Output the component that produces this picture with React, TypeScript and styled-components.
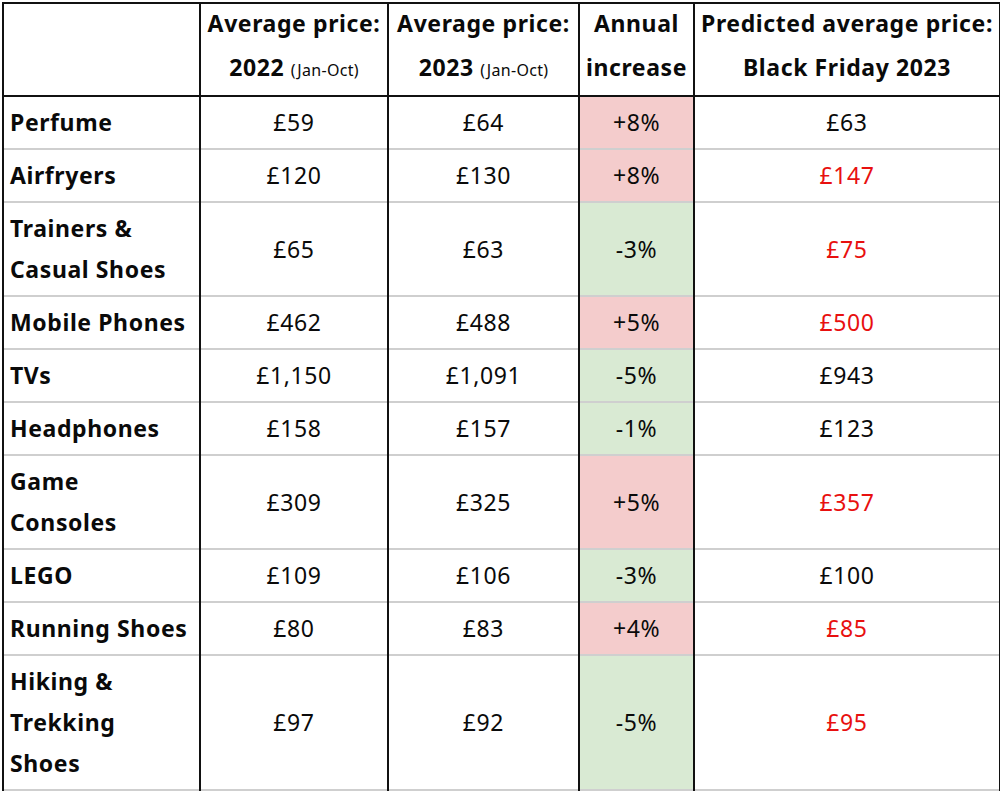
import React from "react";
import styled, { createGlobalStyle } from "styled-components";

const Global = createGlobalStyle`
  html, body { margin: 0; padding: 0; background: #fff; }
  body { font-family: "Noto Sans", "Open Sans", sans-serif; color: #0a0a0a; }
`;

const Wrap = styled.div`
  padding: 2px;
`;

const Table = styled.table`
  border-collapse: collapse;
  table-layout: fixed;
  width: 997px;
  border: 2px solid #111;
  font-size: 23px;
  letter-spacing: 0.6px;
`;

const HeadCell = styled.th`
  border: 2px solid #111;
  font-weight: 700;
  text-align: center;
  vertical-align: middle;
  padding: 0 0 3px;
  line-height: 44px;
  white-space: nowrap;
`;

const HeadText = styled.div`
  margin: -3px 0 3px;
`;

const Small = styled.span`
  font-size: 16px;
  font-weight: 400;
  line-height: 1;
  letter-spacing: 0.3px;
`;

const Row = styled.tr`
  border-bottom: 2px solid #cfcfcf;
`;

const Cell = styled.td<{ $tone?: "up" | "down"; $red?: boolean; $label?: boolean }>`
  border-left: 2px solid #111;
  border-right: 2px solid #111;
  padding: 5px 6px 5px;
  line-height: 41px;
  text-align: ${(p) => (p.$label ? "left" : "center")};
  font-weight: ${(p) => (p.$label ? 700 : 400)};
  color: ${(p) => (p.$red ? "#e8100f" : "#0a0a0a")};
  background: ${(p) =>
    p.$tone === "up" ? "#f4cccc" : p.$tone === "down" ? "#d9ead3" : "#fff"};
  vertical-align: middle;
  white-space: nowrap;
`;

type Item = {
  name: string[];
  p22: string;
  p23: string;
  inc: string;
  bf: string;
  red: boolean;
};

const items: Item[] = [
  { name: ["Perfume"], p22: "£59", p23: "£64", inc: "+8%", bf: "£63", red: false },
  { name: ["Airfryers"], p22: "£120", p23: "£130", inc: "+8%", bf: "£147", red: true },
  { name: ["Trainers &", "Casual Shoes"], p22: "£65", p23: "£63", inc: "-3%", bf: "£75", red: true },
  { name: ["Mobile Phones"], p22: "£462", p23: "£488", inc: "+5%", bf: "£500", red: true },
  { name: ["TVs"], p22: "£1,150", p23: "£1,091", inc: "-5%", bf: "£943", red: false },
  { name: ["Headphones"], p22: "£158", p23: "£157", inc: "-1%", bf: "£123", red: false },
  { name: ["Game", "Consoles"], p22: "£309", p23: "£325", inc: "+5%", bf: "£357", red: true },
  { name: ["LEGO"], p22: "£109", p23: "£106", inc: "-3%", bf: "£100", red: false },
  { name: ["Running Shoes"], p22: "£80", p23: "£83", inc: "+4%", bf: "£85", red: true },
  { name: ["Hiking &", "Trekking", "Shoes"], p22: "£97", p23: "£92", inc: "-5%", bf: "£95", red: true },
];

export default function App() {
  return (
    <Wrap>
      <Global />
      <Table>
        <colgroup>
          <col style={{ width: 197 }} />
          <col style={{ width: 188 }} />
          <col style={{ width: 191 }} />
          <col style={{ width: 115 }} />
          <col style={{ width: 306 }} />
        </colgroup>
        <thead>
          <tr>
            <HeadCell />
            <HeadCell>
              <HeadText>
                Average price:
                <br />
                2022 <Small>(Jan-Oct)</Small>
              </HeadText>
            </HeadCell>
            <HeadCell>
              <HeadText>
                Average price:
                <br />
                2023 <Small>(Jan-Oct)</Small>
              </HeadText>
            </HeadCell>
            <HeadCell>
              <HeadText>
                Annual
                <br />
                increase
              </HeadText>
            </HeadCell>
            <HeadCell>
              <HeadText>
                Predicted average price:
                <br />
                Black Friday 2023
              </HeadText>
            </HeadCell>
          </tr>
        </thead>
        <tbody>
          {items.map((it) => (
            <Row key={it.name.join(" ")}>
              <Cell $label>
                {it.name.map((n, i) => (
                  <React.Fragment key={n}>
                    {i > 0 && <br />}
                    {n}
                  </React.Fragment>
                ))}
              </Cell>
              <Cell>{it.p22}</Cell>
              <Cell>{it.p23}</Cell>
              <Cell $tone={it.inc.startsWith("+") ? "up" : "down"}>{it.inc}</Cell>
              <Cell $red={it.red}>{it.bf}</Cell>
            </Row>
          ))}
        </tbody>
      </Table>
    </Wrap>
  );
}
